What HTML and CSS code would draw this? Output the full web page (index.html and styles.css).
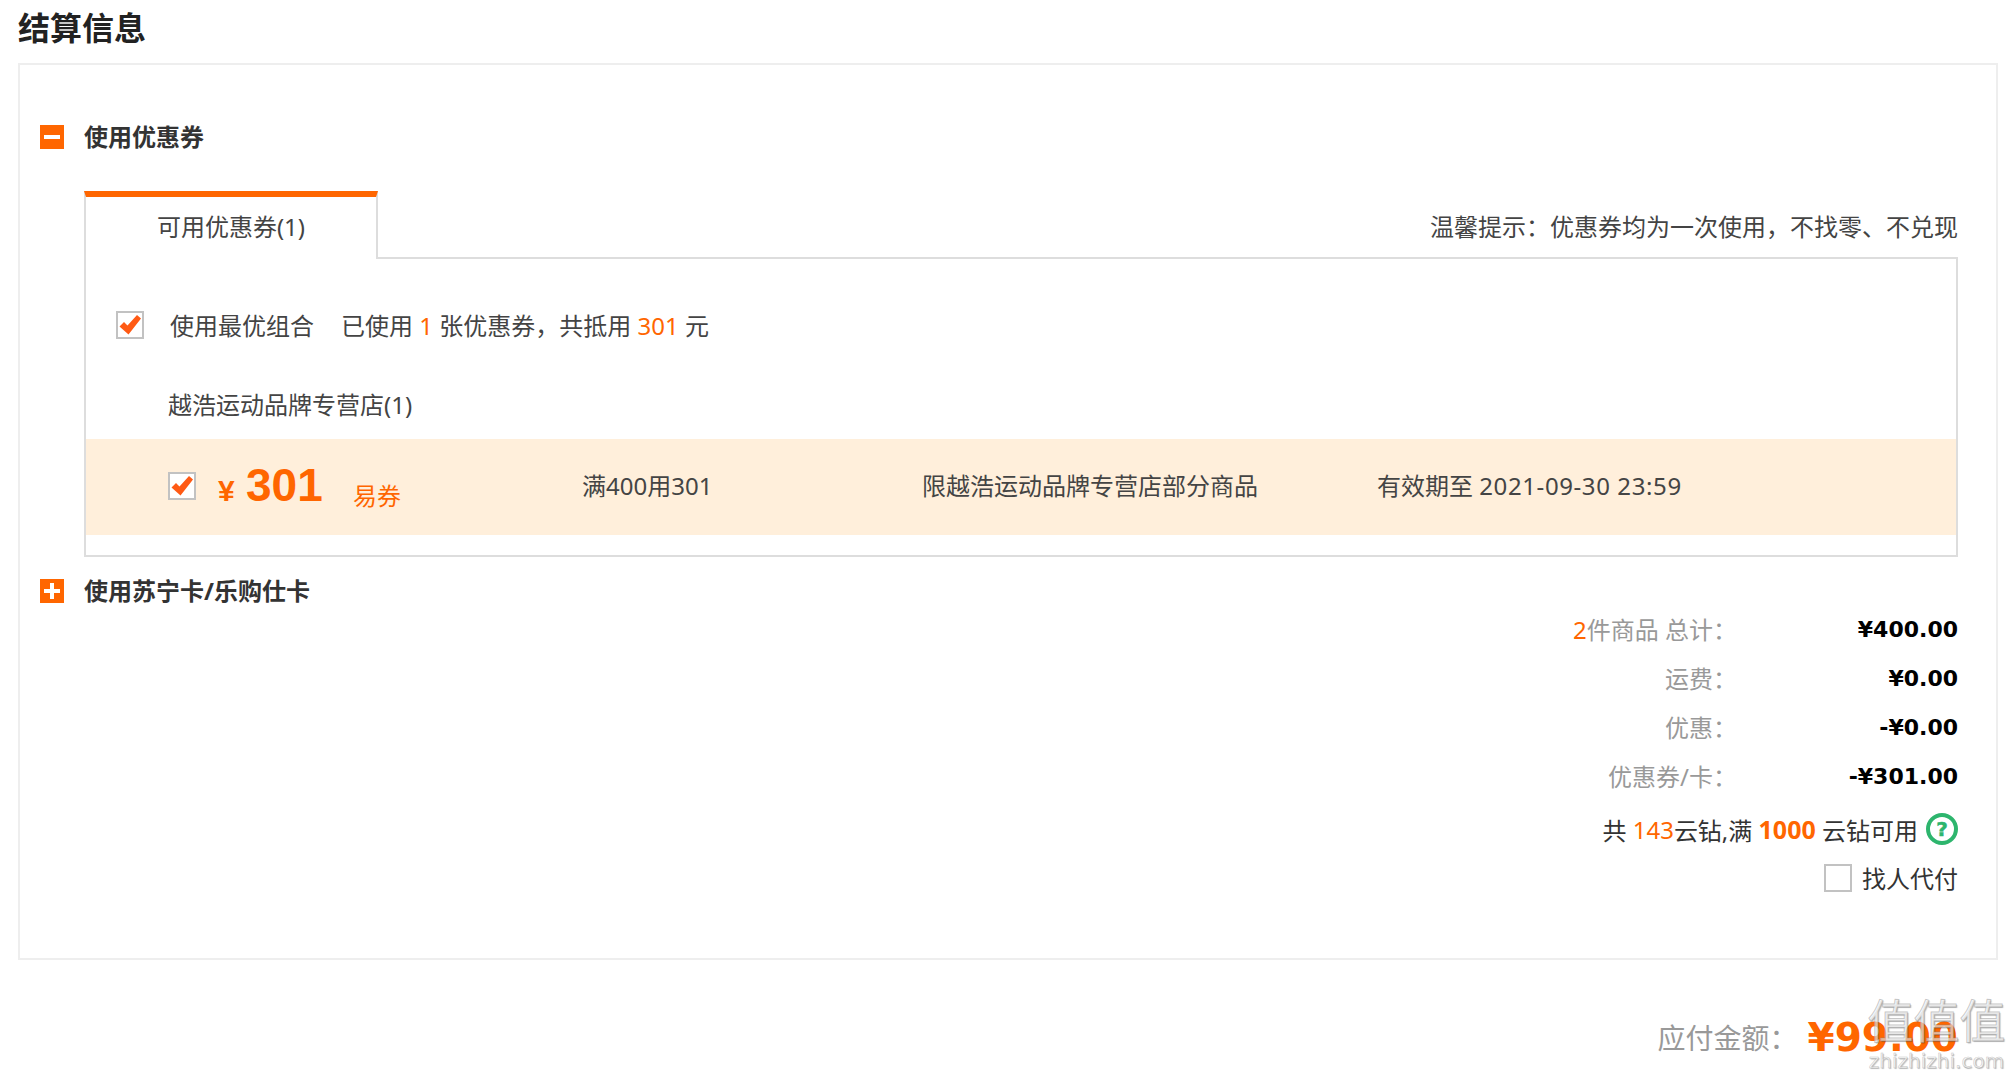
FILE: index.html
```html
<!DOCTYPE html>
<html lang="zh-CN">
<head>
<meta charset="utf-8">
<title>结算信息</title>
<link rel="stylesheet" href="styles.css">
</head>
<body>
<div class="page">
  <h1 class="title">结算信息</h1>
  <section class="box">
    <div class="head head-first">
      <svg class="toggle" viewBox="0 0 24 24"><rect width="24" height="24" fill="#ff6600"/><rect x="4" y="10" width="16" height="4" fill="#fff"/></svg>
      <span>使用优惠券</span>
    </div>
    <div class="coupons">
      <div class="tabs">
        <div class="tab">可用优惠券(1)</div>
        <div class="tip">温馨提示：优惠券均为一次使用，不找零、不兑现</div>
      </div>
      <div class="panel">
        <div class="best">
          <span class="check check-best"><svg viewBox="0 0 24 24"><path d="M1.500 13.500L6 9L9.500 12.500L19 2L23 5.500L10.500 21.500Z" fill="#ff5a14"/></svg></span>
          <span class="best-label">使用最优组合</span>
          <span class="best-note">已使用 <em>1</em> 张优惠券，共抵用 <em>301</em> 元</span>
        </div>
        <div class="store">越浩运动品牌专营店(1)</div>
        <div class="coupon">
          <span class="check check-coupon"><svg viewBox="0 0 24 24"><path d="M1.500 13.500L6 9L9.500 12.500L19 2L23 5.500L10.500 21.500Z" fill="#ff5a14"/></svg></span>
          <span class="amount"><span class="yen">¥</span><b>301</b></span>
          <span class="kind">易券</span>
          <span class="rule">满400用301</span>
          <span class="scope">限越浩运动品牌专营店部分商品</span>
          <span class="valid">有效期至 <span class="date">2021-09-30 23:59</span></span>
        </div>
      </div>
    </div>
    <div class="head head-second">
      <svg class="toggle" viewBox="0 0 24 24"><rect width="24" height="24" fill="#ff6600"/><rect x="4" y="10" width="16" height="4" fill="#fff"/><rect x="10" y="4" width="4" height="16" fill="#fff"/></svg>
      <span>使用苏宁卡/乐购仕卡</span>
    </div>
    <div class="summary">
      <div class="line"><span class="label"><em>2</em>件商品 总计：</span><span class="value">¥400.00</span></div>
      <div class="line"><span class="label">运费：</span><span class="value">¥0.00</span></div>
      <div class="line"><span class="label">优惠：</span><span class="value">-¥0.00</span></div>
      <div class="line"><span class="label">优惠券/卡：</span><span class="value">-¥301.00</span></div>
      <div class="points">共 <em>143</em>云钻,满 <b>1000</b> 云钻可用<span class="help">?</span></div>
      <div class="proxy"><span class="check"></span>找人代付</div>
    </div>
  </section>
  <div class="total"><span class="total-label">应付金额：</span><span class="total-value">¥99.00</span></div>
  <div class="watermark"><span class="wm-logo">值值值</span><span class="wm-url">zhizhizhi.com</span></div>
</div>
</body>
</html>
```
FILE: styles.css
```css
* { box-sizing: border-box; }
html, body { margin: 0; background: #fff; }
body { font-family: "Noto Sans", "Noto Sans CJK SC", "Liberation Sans", sans-serif; font-size: 24px; color: #333; }
em { font-style: normal; color: #ff6600; }
.page { position: relative; width: 2014px; height: 1081px; overflow: hidden; }
.title { margin: 0; height: 63px; padding-left: 18px; font-size: 32px; line-height: 56px; font-weight: 700; color: #222; }
.box { width: 1980px; margin-left: 18px; border: 2px solid #eee; padding: 0 38px 58px 20px; }
.head { display: flex; align-items: center; gap: 20px; font-weight: 700; color: #333; height: 28px; line-height: 28px; }
.head-first { margin-top: 58px; }
.head-second { margin-top: 20px; }
.toggle { width: 24px; height: 24px; flex: none; }
.coupons { margin: 40px 0 0 44px; }
.tabs { display: flex; height: 68px; }
.tab { width: 294px; flex: none; border: 2px solid #ddd; border-top: 6px solid #ff6600; border-bottom: 0; text-align: center; line-height: 60px; color: #444; }
.tip { flex: 1; border-bottom: 2px solid #ddd; text-align: right; line-height: 72px; color: #444; }
.panel { height: 298px; border: 2px solid #ddd; border-top: 0; }
.best { display: flex; align-items: center; height: 130px; padding: 0 0 0 30px; color: #444; }
.check { display: inline-flex; width: 28px; height: 28px; flex: none; border: 2px solid #c2c2c2; background: #fff; }
.check svg { width: 24px; height: 24px; }
.check-best { margin-top: 2px; }
.best-label { margin-left: 26px; }
.best-note { margin-left: 27px; white-space: pre; }
.store { height: 50px; padding-left: 82px; line-height: 32px; color: #444; }
.coupon { display: flex; align-items: center; height: 96px; padding-left: 82px; background: #ffefdb; color: #444; }
.check-coupon { margin-bottom: 2px; }
.amount { display: flex; align-items: baseline; margin: 0 0 4px 22px; width: 135px; flex: none; color: #ff6600; font-family: "Liberation Sans", sans-serif; font-weight: 700; }
.yen { font-size: 30px; width: 28px; }
.amount b { font-size: 46px; line-height: 46px; }
.kind { width: 229px; flex: none; margin-top: 14px; color: #ff6600; }
.rule { width: 340px; flex: none; margin-bottom: 5px; }
.scope { width: 455px; flex: none; margin-bottom: 5px; }
.valid { margin-bottom: 5px; }
.date { letter-spacing: .6px; }
.summary { display: flex; flex-direction: column; align-items: flex-end; }
.line { display: flex; height: 49px; align-items: center; }
.label { color: #999; white-space: pre; width: 400px; text-align: right; margin-top: -2px; }
.value { width: 221px; text-align: right; font-family: "DejaVu Sans", sans-serif; font-weight: 700; font-size: 22px; color: #000; }
.points { display: flex; align-items: center; white-space: pre; height: 48px; margin-top: 4px; color: #333; }
.points b { color: #ff6600; font-weight: 700; font-size: 25px; }
.help { display: inline-flex; align-items: center; justify-content: center; width: 32px; height: 32px; margin-left: 8px; border: 4px solid #2db56d; border-radius: 50%; color: #2db56d; font-family: "DejaVu Sans", sans-serif; font-size: 20px; font-weight: 700; line-height: 1; -webkit-text-stroke: .5px #2db56d; }
.proxy { display: flex; align-items: center; gap: 10px; height: 47px; padding-top: 2px; }
.total { display: flex; align-items: center; justify-content: flex-end; margin: 51px 56px 0 0; height: 52px; }
.total-label { color: #999; font-size: 28px; white-space: pre; margin-right: 10px; }
.total-value { font-family: "DejaVu Sans", sans-serif; font-weight: 700; font-size: 39px; color: #ff6600; }
.watermark { position: absolute; left: 1864px; top: 990px; width: 145px; display: flex; flex-direction: column; align-items: center; color: rgba(255,255,255,.6); -webkit-text-stroke: 1px rgba(130,130,130,.45); text-shadow: 1px 1px 1px rgba(0,0,0,.25); }
.wm-logo { font-size: 46px; line-height: 60px; font-weight: 400; white-space: nowrap; }
.wm-url { font-family: "DejaVu Sans", sans-serif; font-size: 20px; line-height: 22px; white-space: nowrap; -webkit-text-stroke: .5px rgba(130,130,130,.5); }
```
